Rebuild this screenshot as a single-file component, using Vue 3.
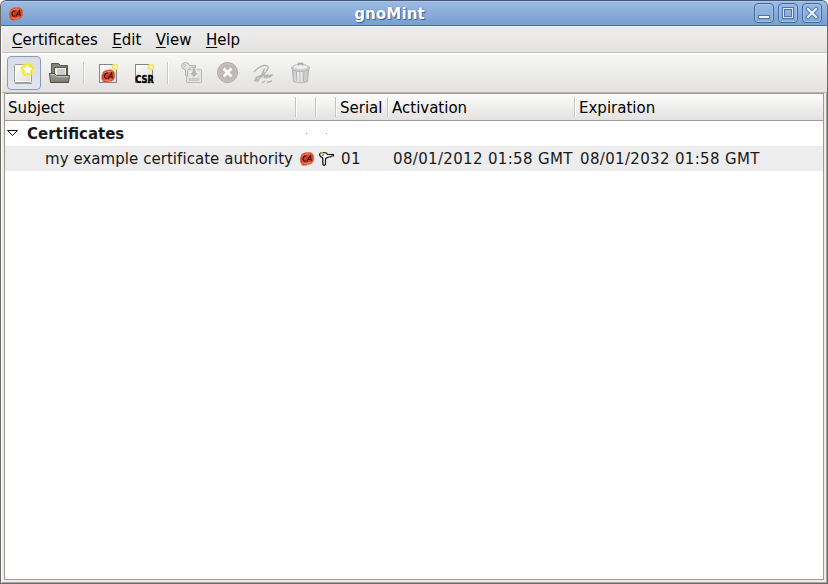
<script setup>
const menus = ['Certificates', 'Edit', 'View', 'Help']
</script>

<template>
  <div class="window">
    <svg class="defs" width="0" height="0" aria-hidden="true">
      <defs>
        <radialGradient id="wax"><stop offset="0" stop-color="#b93a22" /><stop offset=".6" stop-color="#dc4e30" /><stop offset="1" stop-color="#cc4529" /></radialGradient>
        <linearGradient id="paper" x1="0" y1="0" x2="1" y2="1"><stop offset="0" stop-color="#fff" /><stop offset="1" stop-color="#dcdcd8" /></linearGradient>
        <linearGradient id="folder" x1="0" y1="0" x2="0" y2="1"><stop offset="0" stop-color="#a5a799" /><stop offset="1" stop-color="#777a6c" /></linearGradient>
        <linearGradient id="bin" x1="0" y1="0" x2="1" y2="0"><stop offset="0" stop-color="#c4c4c4" /><stop offset=".4" stop-color="#ececec" /><stop offset="1" stop-color="#bfbfbf" /></linearGradient>
        <radialGradient id="glow"><stop offset="0" stop-color="#fff240" /><stop offset=".65" stop-color="#f7ee42" stop-opacity=".9" /><stop offset="1" stop-color="#f7ee42" stop-opacity="0" /></radialGradient>
        <symbol id="seal" viewBox="0 0 16 16">
          <path d="M4 2.6Q6 1.2 8 1.6 11 .8 13 2.2 15.2 4 14.8 6.5 15.4 9.5 13.6 11.6 12 13.6 9 13.4 7 15 4.4 14.4 2 14.6 2.4 12.4.6 11.4 1.2 9 .6 7 2 5.4 2.2 3.4 4 2.6Z" fill="url(#wax)" stroke="#d98672" stroke-width=".6" />
          <path d="M3.2 11.8q4 2.6 9-.8M3.4 5q4-3.4 9-1.6" fill="none" stroke="#f08a70" stroke-width=".9" />
          <path d="M7.4 4.8Q4.4 4.6 4 7.6q0 2.9 3.2 2.400M7.800 10.400l3.600-5.800.800 5.600M9 8.500h3" fill="none" stroke="#4e160c" stroke-width="1.200" />
        </symbol>
      </defs>
    </svg>

    <header class="titlebar">
      <svg class="app-icon" width="16" height="16"><use href="#seal" /></svg>
      <h1>gnoMint</h1>
      <div class="controls">
        <button aria-label="Minimize"><svg width="18" height="18"><rect x="3.5" y="11.5" width="11" height="3" fill="#f0f4fa" stroke="#4c76ab" /></svg></button>
        <button aria-label="Maximize"><svg width="18" height="18" fill="none"><rect x="3.5" y="3.5" width="11" height="11" stroke="#4c76ab" /><rect x="4.5" y="4.5" width="9" height="9" stroke="#dbe6f5" /><rect x="5.5" y="5.5" width="7" height="7" stroke="#4c76ab" /></svg></button>
        <button aria-label="Close"><svg width="18" height="18" fill="none" stroke-linecap="square"><path d="m5 5 8 8m0-8-8 8" stroke="#4c76ab" stroke-width="4" /><path d="m5 5 8 8m0-8-8 8" stroke="#edf2fa" stroke-width="2.2" /></svg></button>
      </div>
    </header>

    <nav class="menubar">
      <span v-for="menu in menus" :key="menu"><u>{{ menu[0] }}</u>{{ menu.slice(1) }}</span>
    </nav>

    <div class="toolbar">
      <button class="tool active" aria-label="New">
        <svg width="24" height="24">
          <rect x="2.5" y="3.5" width="17" height="18" rx="1" fill="url(#paper)" stroke="#9b9d98" />
          <path d="M3 22.5h17" stroke="#a5a7a2" />
          <rect x="3.5" y="4.5" width="15" height="16" fill="none" stroke="#fff" />
          <circle cx="15.500" cy="8.500" r="8" fill="url(#glow)" />
          <path d="m15.500 2.500 1.800 3.600 4.200.600-3 3 .700 4.200-3.700-1.900-3.700 1.900.700-4.200-3-3 4.200-.600Z" fill="#fff" stroke="#eadb12" stroke-width=".8" />
        </svg>
      </button>
      <button class="tool" aria-label="Open">
        <svg width="24" height="24">
          <path d="M3.5 17V2.5h7l2 2h7V17" fill="#828477" stroke="#55574c" />
          <path d="M6.5 16V6.5h12V16" fill="#f2f2ef" stroke="#585a50" />
          <path d="M9 9h8M9 11h8M9 13h8" stroke="#aaa" />
          <path d="M1.500 12.500h5l2 2h13l-1 7h-18Z" fill="url(#folder)" stroke="#4c4e44" />
          <path d="M2.500 13.500h4l2 2h12" fill="none" stroke="#c3c5b8" />
        </svg>
      </button>
      <i class="separator" />
      <button class="tool" aria-label="Add self-signed CA">
        <svg width="24" height="24">
          <rect x="3.500" y="3.500" width="17" height="18" fill="url(#paper)" stroke="#858782" />
          <use href="#seal" x="4.500" y="7.500" width="15.500" height="15.500" />
          <circle cx="19" cy="6" r="2.500" fill="#eeeedf" stroke="#f4e765" stroke-width="1.600" />
        </svg>
      </button>
      <button class="tool" aria-label="Add CSR">
        <svg class="csr-icon" width="24" height="24">
          <rect x="3.500" y="3.500" width="17" height="18" fill="url(#paper)" stroke="#858782" />
          <circle cx="19" cy="6" r="2.500" fill="#eeeedf" stroke="#f4e765" stroke-width="1.600" />
          <text class="csr" x="3.300" y="22" textLength="18.500" lengthAdjust="spacingAndGlyphs">CSR</text>
        </svg>
      </button>
      <i class="separator" />
      <button class="tool" aria-label="Extract key" disabled>
        <svg width="24" height="24" fill="#e4e4e3" stroke="#bbb">
          <rect x="6.500" y="8.500" width="15" height="13" rx="1" />
          <path d="M9 17.500h10v2H9Z" fill="#d4d4d4" stroke="#c8c8c8" />
          <path d="M12 7v4.500H9l5 5 5-5h-3V7Z" fill="#b4b4b4" stroke="#f0f0f0" />
          <path d="m5.500 8.500-3-1-1-3 1-2 3-1 3 1 1 2h6v2h-4l-2 1-2 2v6l-2-1v-3Z" fill="#e2e2e2" stroke="#b0b0b0" />
          <circle cx="4.500" cy="4.500" r="1" fill="#fff" />
        </svg>
      </button>
      <button class="tool" aria-label="Revoke" disabled>
        <svg width="24" height="24">
          <circle cx="11.500" cy="11.500" r="10" fill="#c0b7b7" stroke="#aea6a6" />
          <circle cx="11.500" cy="11.500" r="8.800" fill="none" stroke="#cbc3c3" />
          <path d="m7.500 7.500 8 8m0-8-8 8" stroke="#fff" stroke-width="2.600" />
        </svg>
      </button>
      <button class="tool" aria-label="Sign" disabled>
        <svg width="24" height="24" fill="none" stroke="#b4b4b4" stroke-width="1.400">
          <path d="M2 11Q6 6 12 4.500q5-.500 4 3-2 5-9 8-3 .500-3.500 2.500 2 1.500 5-1.500l4-9-3.500 9q3-3 4-2.500l-1 3q2-3 4-3l-1 2.500 3-2-1 2 4-3" />
          <path d="m2 19.500 5 .500m3 2 3-2m2 1.500 5-1.500" />
        </svg>
      </button>
      <button class="tool" aria-label="Delete" disabled>
        <svg width="24" height="24" stroke="#b2b2b2">
          <path d="m4.500 8.500 1 12q7 3 14 0l1-12Z" fill="url(#bin)" />
          <path d="m8.500 11 .500 9m3-9v10m4-10-.500 9" stroke="#adadad" />
          <path d="m9.800 11 .400 9m3-9v9" stroke="#eee" />
          <ellipse cx="12.500" cy="7" rx="9" ry="3.500" fill="#cfcfcf" />
          <ellipse cx="12.500" cy="6" rx="7.500" ry="2.500" fill="#eee" stroke="#ccc" />
          <path d="M10.500 4.500v-2h4v2" fill="none" stroke="#aaa" stroke-width="1.500" />
        </svg>
      </button>
    </div>

    <main class="table">
      <div class="row head">
        <span>Subject</span><span /><span /><span>Serial</span><span>Activation</span><span>Expiration</span>
      </div>
      <div class="row group">
        <span class="group-name"><svg width="13" height="9"><path d="M1.500 1.500h10l-5 5Z" fill="#fff" stroke="#111" /></svg><b>Certificates</b></span>
        <span class="cell-icon"><i class="dot" /></span><span class="cell-icon"><i class="dot" /></span>
      </div>
      <div class="row item">
        <span class="subject">my example certificate authority</span>
        <span class="cell-icon"><svg width="16" height="16"><use href="#seal" /></svg></span>
        <span class="cell-icon key-cell">
          <svg width="17" height="16" fill="#f4f4f4" stroke="#111" stroke-width="1.200">
            <path d="m4.500 6.500-2-1-1-2 1-1.500 3-.500 3 .500 1 1.500h6v1.500h-2l-1 1h-2l-2 1-1 1v5.500l-1.500 1-1-1v-2l-.500-1 .500-1Z" />
            <path d="m2.500 2.500 2.500-1" stroke="#d9b426" stroke-width="1.500" /><circle cx="5" cy="4" r=".8" fill="#444" stroke="none" />
          </svg>
        </span>
        <span class="serial">01</span><span class="date">08/01/2012 01:58 GMT</span><span class="date">08/01/2032 01:58 GMT</span>
      </div>
    </main>
  </div>
</template>

<style>
body { margin: 0; background: #fff; overflow: hidden; }
</style>

<style scoped>
* { box-sizing: border-box; }
.window { width: 828px; height: 584px; display: flex; flex-direction: column; background: #edeceb; border: 1px solid #6b6966; border-top: 0; border-radius: 6px 6px 0 0; overflow: hidden; font: 15px/20px "DejaVu Sans", sans-serif; color: #000; box-shadow: inset 1px 0 #fff, inset -1px -1px #aaa7a3; }
.defs { position: absolute; }
svg { display: block; flex: none; }
button { padding: 0; border: 0; background: none; display: grid; place-items: center; }
.titlebar { height: 26px; flex: none; margin: 0 -1px; padding: 0 5px 0 7px; display: flex; align-items: center; background: linear-gradient(#9dbbe3, #789fd0); border: 1px solid #466fa5; border-top-color: #445878; border-radius: 6px 6px 0 0; box-shadow: inset 0 1px #abc6e9; }
h1 { flex: 1; margin: 1px 0 0; padding-left: 1px; text-align: center; font-size: 15px; line-height: 20px; letter-spacing: .15px; color: #fff; text-shadow: 1px 1px 1px #365f94, 0 0 1px #426b9f; }
.app-icon { margin-top: 1px; }
.controls { display: flex; gap: 4px; }
.controls button { width: 20px; height: 20px; border: 1px solid #426b9f; border-radius: 4px; background: linear-gradient(#9ab9e2, #82a7d7); box-shadow: inset 0 0 0 1px #a5c1e8; }
.menubar { height: 27px; flex: none; display: flex; gap: 14.5px; margin-left: 1px; padding: 4px 0 0 10px; background: linear-gradient(#efeeec, #e4e2e0); border-bottom: 1px solid #c4c2bf; }
u { text-decoration-thickness: 1px; text-underline-offset: 2px; }
.toolbar { height: 40px; flex: none; display: flex; align-items: center; padding-left: 6px; margin-left: 1px; background: linear-gradient(#f7f7f6, #e4e2e0); border-top: 1px solid #fff; border-bottom: 1px solid #b5b3b0; }
.tool { width: 34px; height: 34px; margin-right: 2px; border: 1px solid transparent; border-radius: 4px; }
.tool.active { margin-left: -1px; background: linear-gradient(#d9dce4, #e2e6ef); border-color: #879bbb; }
.separator { width: 2px; height: 22px; margin: 0 6px 0 4px; background: linear-gradient(90deg, #c9c7c4 50%, #fff 50%); }
.table { flex: 1; margin: 0 3px 3px; background: #fff; border: 1px solid #9c9a97; }
.row { height: 25px; display: grid; grid-template-columns: 291px 20px 20px 52px 187px 1fr; align-items: center; white-space: pre; color: #1a1a1a; }
.row > span { padding-left: 5px; }
.head { height: 27px; background: linear-gradient(#fcfcfb, #e4e2e0); border-bottom: 1px solid #9c9a97; color: #000; }
.head > span { height: 20px; padding-left: 3px; line-height: 22px; border-left: 1px solid #fff; box-shadow: -1px 0 #c5c3c0; }
.head > span:first-child { padding-left: 3px; letter-spacing: .05px; border: 0; box-shadow: none; }
.row .group-name { display: flex; align-items: center; gap: 8px; padding-left: 1px; }
.item { background: #ededed; }
.row .subject { padding-left: 40px; letter-spacing: .05px; }
.row .cell-icon { padding-left: 3px; }
.row .key-cell { padding-left: 2px; }
.serial { letter-spacing: .35px; }
.date { letter-spacing: .34px; }
.dot { display: block; width: 1px; height: 1px; margin-left: 7px; background: #a98b72; }
.csr-icon { overflow: visible; }
.csr { font: bold 11px "DejaVu Sans", sans-serif; fill: #000; stroke: #000; stroke-width: .4; }
</style>
